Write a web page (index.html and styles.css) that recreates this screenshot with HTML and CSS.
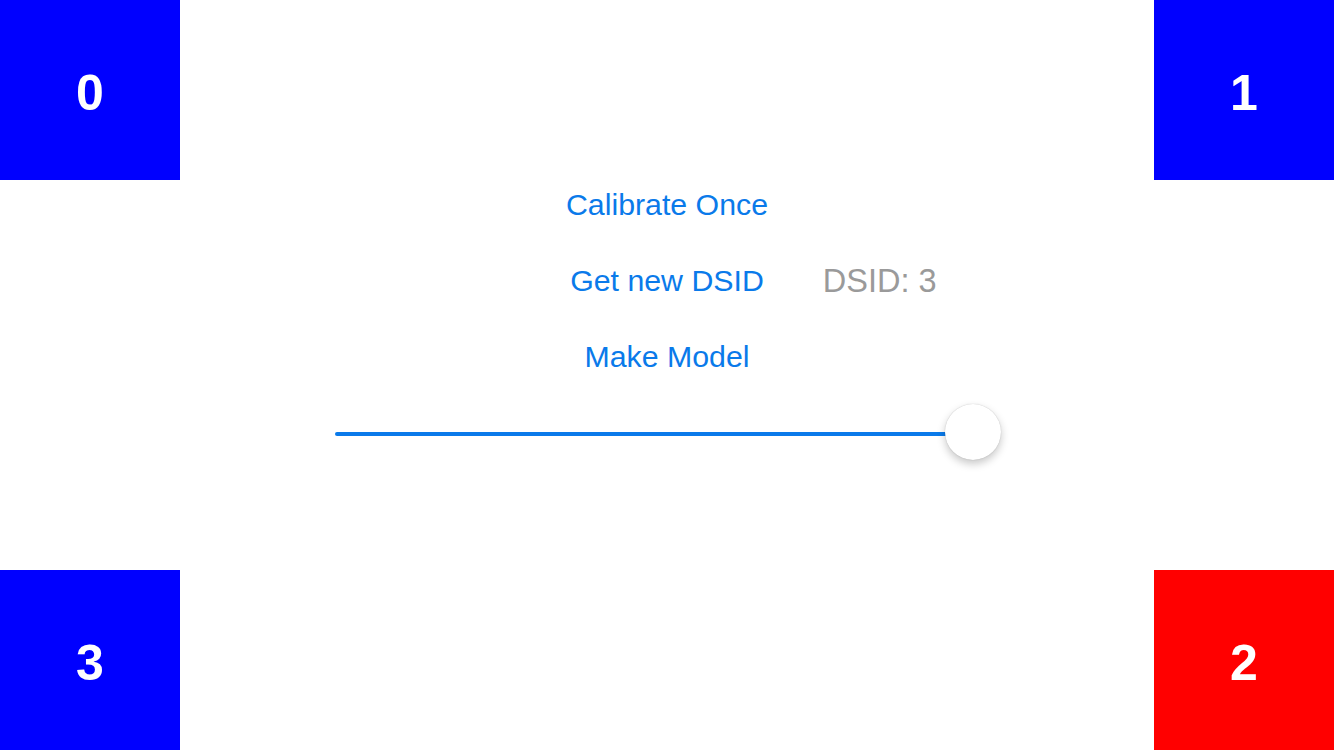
FILE: index.html
```html
<!DOCTYPE html>
<html>
<head>
<meta charset="utf-8">
<link rel="stylesheet" href="styles.css">
</head>
<body>
<div class="screen">
  <div class="corner tl blue">0</div>
  <div class="corner tr blue">1</div>
  <div class="panel">
    <div class="row single"><span class="btn">Calibrate Once</span></div>
    <div class="row triple">
      <span></span>
      <span class="btn">Get new DSID</span>
      <span class="label">DSID: 3</span>
    </div>
    <div class="row single"><span class="btn">Make Model</span></div>
    <div class="slider">
      <div class="track"></div>
      <div class="thumb"></div>
    </div>
  </div>
  <div class="corner bl blue">3</div>
  <div class="corner br red">2</div>
</div>
</body>
</html>
```
FILE: styles.css
```css
html, body {
  margin: 0;
  padding: 0;
  background: #ffffff;
}
.screen {
  width: 1334px;
  height: 750px;
  display: grid;
  grid-template-columns: 180px 1fr 180px;
  grid-template-rows: 180px 1fr 180px;
  font-family: "Liberation Sans", Arial, sans-serif;
  overflow: hidden;
}
.corner {
  display: flex;
  align-items: center;
  justify-content: center;
  color: #ffffff;
  font-weight: bold;
  font-size: 50px;
  padding-top: 5px;
  box-sizing: border-box;
}
.blue { background: #0000ff; }
.red { background: #ff0000; }
.tl { grid-column: 1; grid-row: 1; }
.tr { grid-column: 3; grid-row: 1; }
.bl { grid-column: 1; grid-row: 3; }
.br { grid-column: 3; grid-row: 3; }
.panel {
  grid-column: 2;
  grid-row: 2;
  display: flex;
  flex-direction: column;
  align-items: center;
  padding-top: 7px;
}
.row {
  height: 36px;
  line-height: 36px;
  font-size: 30.3px;
  width: 100%;
}
.single {
  display: flex;
  justify-content: center;
}
.triple {
  display: grid;
  grid-template-columns: 1fr auto 1fr;
  margin-top: 40px;
  margin-bottom: 40px;
}
.btn {
  color: #0a7aea;
}
.label {
  color: #9a9a9a;
  font-size: 32.5px;
  margin-left: 59px;
}
.slider {
  margin-top: 29px;
  width: 666px;
  height: 56px;
  display: flex;
  align-items: center;
  margin-left: 2px;
}
.track {
  flex: 1;
  height: 4px;
  border-radius: 2px;
  background: #0a7aea;
  margin-right: -28px;
  margin-top: 3px;
}
.thumb {
  width: 56px;
  height: 56px;
  border-radius: 50%;
  background: #ffffff;
  box-shadow: 0 4px 8px rgba(0, 0, 0, 0.22), 0 0 1px rgba(0, 0, 0, 0.25);
  position: relative;
}
```
